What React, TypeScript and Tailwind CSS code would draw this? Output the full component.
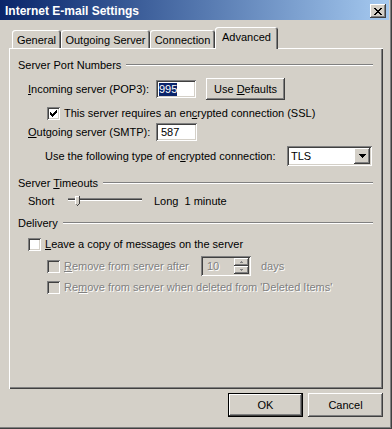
import React from 'react';

// classic 3D edges
const raised =
  'shadow-[inset_-1px_-1px_#404040,inset_1px_1px_#ffffff,inset_-2px_-2px_#808080,inset_2px_2px_#d4d0c8]';
const sunken =
  'shadow-[inset_1px_1px_#808080,inset_-1px_-1px_#ffffff,inset_2px_2px_#404040,inset_-2px_-2px_#d4d0c8]';
const defaultBtn =
  'shadow-[inset_0_0_0_1px_#000000,inset_-2px_-2px_#404040,inset_2px_2px_#ffffff,inset_-3px_-3px_#808080]';
const disabledText = 'text-[#808080] [text-shadow:1px_1px_0_#ffffff]';

function U({ children }: { children: React.ReactNode }) {
  return <span className="underline underline-offset-[1px]">{children}</span>;
}

function CheckBox({ checked = false, disabled = false }: { checked?: boolean; disabled?: boolean }) {
  // pixel check mark, [x, y, w]
  const marks = [
    [9, 3, 1], [8, 4, 2], [3, 5, 1], [7, 5, 3], [3, 6, 2], [6, 6, 3], [3, 7, 5], [4, 8, 3], [5, 9, 1],
  ];
  return (
    <div className={`w-[13px] h-[13px] shrink-0 ${sunken} ${disabled ? 'bg-[#d4d0c8]' : 'bg-white'}`}>
      {checked && (
        <svg width="13" height="13" viewBox="0 0 13 13" shapeRendering="crispEdges">
          {marks.map(([x, y, w], i) => (
            <rect key={i} x={x} y={y} width={w} height={1} fill="#000" />
          ))}
        </svg>
      )}
    </div>
  );
}

function GroupHeader({ children }: { children: React.ReactNode }) {
  return (
    <div className="flex items-center h-[14px] pl-[9px] pr-[10px]">
      <span className="whitespace-nowrap">{children}</span>
      <div className="flex-1 ml-[5px] h-0 border-t border-b border-t-[#808080] border-b-white" />
    </div>
  );
}

function Slider() {
  return (
    <svg width="74" height="16" viewBox="0 0 74 16" shapeRendering="crispEdges">
      <rect x="0" y="5" width="74" height="1" fill="#808080" />
      <rect x="0" y="6" width="74" height="1" fill="#404040" />
      <rect x="0" y="7" width="74" height="1" fill="#ffffff" />
      {/* thumb */}
      <rect x="7" y="3" width="5" height="8" fill="#d4d0c8" />
      <rect x="7" y="3" width="5" height="1" fill="#ffffff" />
      <rect x="7" y="3" width="1" height="8" fill="#ffffff" />
      <rect x="11" y="3" width="1" height="8" fill="#404040" />
      <rect x="8" y="11" width="1" height="1" fill="#808080" />
      <rect x="10" y="11" width="1" height="1" fill="#404040" />
      <rect x="9" y="12" width="1" height="1" fill="#404040" />
    </svg>
  );
}

function Tab({ label, width, selected = false }: { label: React.ReactNode; width: number; selected?: boolean }) {
  return (
    <div
      style={{ width }}
      className={`flex justify-center rounded-t-[3px] shadow-[inset_1px_1px_#ffffff,inset_-1px_0_#404040,inset_-2px_0_#808080] ${
        selected ? 'h-[22px] -mb-px relative z-10 bg-[#d4d0c8] pt-[4px]' : 'h-[18px] pt-[4px]'
      }`}
    >
      {label}
    </div>
  );
}

export default function App() {
  return (
    <div className="w-[392px] h-[429px] bg-[#d4d0c8] font-['Liberation_Sans',Arial,sans-serif] text-[11px] leading-[13px] text-black shadow-[inset_-1px_-1px_#404040,inset_-2px_-2px_#808080] flex flex-col overflow-hidden">
      {/* title bar */}
      <div className="h-[20px] mr-[3px] bg-linear-to-r from-[#0a246a] to-[#a6caf0] flex items-center pl-[5px] pr-[3px]">
        <span className="text-white font-bold text-[12px] pt-[3px]">Internet E-mail Settings</span>
        <div className={`ml-auto mt-[2px] w-[16px] h-[14px] bg-[#d4d0c8] flex items-center justify-center ${raised}`}>
          <svg width="8" height="7" viewBox="0 0 8 7" shapeRendering="crispEdges">
            <path d="M0 0h2v1h1v1h2V1h1V0h2v1H7v1H6v1H5v1h1v1h1v1h1v1H6V6H5V5H3v1H2v1H0V6h1V5h1V4h1V3H2V2H1V1H0z" fill="#000" />
          </svg>
        </div>
      </div>

      {/* tabs */}
      <div className="mt-[7px] h-[21px] flex items-end pl-[12px]">
        <Tab label="General" width={49} />
        <Tab label="Outgoing Server" width={89} />
        <Tab label="Connection" width={65} />
        <Tab label="Advanced" width={63} selected />
      </div>

      {/* tab page */}
      <div className="ml-[9px] w-[374px] h-[341px] pt-[10px] flex flex-col shadow-[inset_1px_1px_#ffffff,inset_-1px_-1px_#404040,inset_-2px_-2px_#808080]">
        <GroupHeader>Server Port Numbers</GroupHeader>

        <div className="flex items-center h-[22px] mt-[6px] pl-[19px]">
          <span className="w-[128px]">
            <U>I</U>ncoming server (POP3):
          </span>
          <div className={`w-[40px] h-[18px] bg-white pl-[3px] flex items-center ${sunken}`}>
            <span className="bg-[#0a246a] text-white inline-block leading-[13px]">995</span>
          </div>
          <div className={`ml-[10px] w-[79px] h-[22px] flex items-center justify-center ${raised}`}>
            <span>
              Use <U>D</U>efaults
            </span>
          </div>
        </div>

        <div className="flex items-center h-[13px] mt-[7px] pl-[38px] gap-[4px]">
          <CheckBox checked />
          <span>
            This server requires an en<U>c</U>rypted connection (SSL)
          </span>
        </div>

        <div className="flex items-center h-[18px] mt-[3px] pl-[19px]">
          <span className="w-[128px]">
            <U>O</U>utgoing server (SMTP):
          </span>
          <div className={`w-[41px] h-[18px] bg-white pl-[5px] flex items-center ${sunken}`}>587</div>
        </div>

        <div className="flex items-center h-[20px] mt-[5px] pl-[36px]">
          <span className="w-[242px]">
            Use the following type of en<U>c</U>rypted connection:
          </span>
          <div className={`w-[85px] h-[20px] bg-white flex items-center p-[2px] ${sunken}`}>
            <span className="flex-1 pl-[2px]">TLS</span>
            <div className={`w-[16px] h-[16px] bg-[#d4d0c8] flex items-center justify-center ${raised}`}>
              <svg width="7" height="4" viewBox="0 0 7 4" shapeRendering="crispEdges">
                <path d="M0 0h7v1H6v1H5v1H4v1H3V3H2V2H1V1H0z" fill="#000" />
              </svg>
            </div>
          </div>
        </div>

        <div className="mt-[10px]">
          <GroupHeader>
            Server <U>T</U>imeouts
          </GroupHeader>
        </div>

        <div className="flex items-center h-[16px] mt-[3px] pl-[19px] whitespace-nowrap">
          <span className="w-[40px] shrink-0">Short</span>
          <Slider />
          <span className="ml-[12px]">Long</span>
          <span className="ml-[6px]">1 minute</span>
        </div>

        <div className="mt-[7px]">
          <GroupHeader>Delivery</GroupHeader>
        </div>

        <div className="flex items-center h-[13px] mt-[8px] pl-[19px] gap-[4px]">
          <CheckBox />
          <span>
            <U>L</U>eave a copy of messages on the server
          </span>
        </div>

        <div className="flex items-center h-[20px] mt-[5px] pl-[38px]">
          <CheckBox disabled />
          <span className={`ml-[4px] w-[137px] ${disabledText}`}>
            <U>R</U>emove from server after
          </span>
          <div className={`w-[50px] h-[20px] bg-[#d4d0c8] flex items-center p-[2px] ${sunken}`}>
            <span className={`flex-1 pl-[4px] ${disabledText}`}>10</span>
            <div className="w-[15px] h-[16px] flex flex-col">
              <div className={`h-[8px] flex items-center justify-center ${raised}`}>
                <svg width="3" height="2" viewBox="0 0 3 2" shapeRendering="crispEdges">
                  <path d="M1 0h1v1h1v1H0V1h1z" fill="#808080" />
                </svg>
              </div>
              <div className={`h-[8px] flex items-center justify-center ${raised}`}>
                <svg width="3" height="2" viewBox="0 0 3 2" shapeRendering="crispEdges">
                  <path d="M0 0h3v1H2v1H1V1H0z" fill="#808080" />
                </svg>
              </div>
            </div>
          </div>
          <span className={`ml-[10px] ${disabledText}`}>days</span>
        </div>

        <div className="flex items-center h-[13px] mt-[5px] pl-[38px] gap-[4px]">
          <CheckBox disabled />
          <span className={disabledText}>
            Re<U>m</U>ove from server when deleted from 'Deleted Items'
          </span>
        </div>
      </div>

      {/* dialog buttons */}
      <div className="flex mt-[4px] pl-[228px] gap-[5px]">
        <div className={`w-[75px] h-[24px] flex items-center justify-center ${defaultBtn}`}>OK</div>
        <div className={`w-[75px] h-[24px] flex items-center justify-center ${raised}`}>Cancel</div>
      </div>
    </div>
  );
}
